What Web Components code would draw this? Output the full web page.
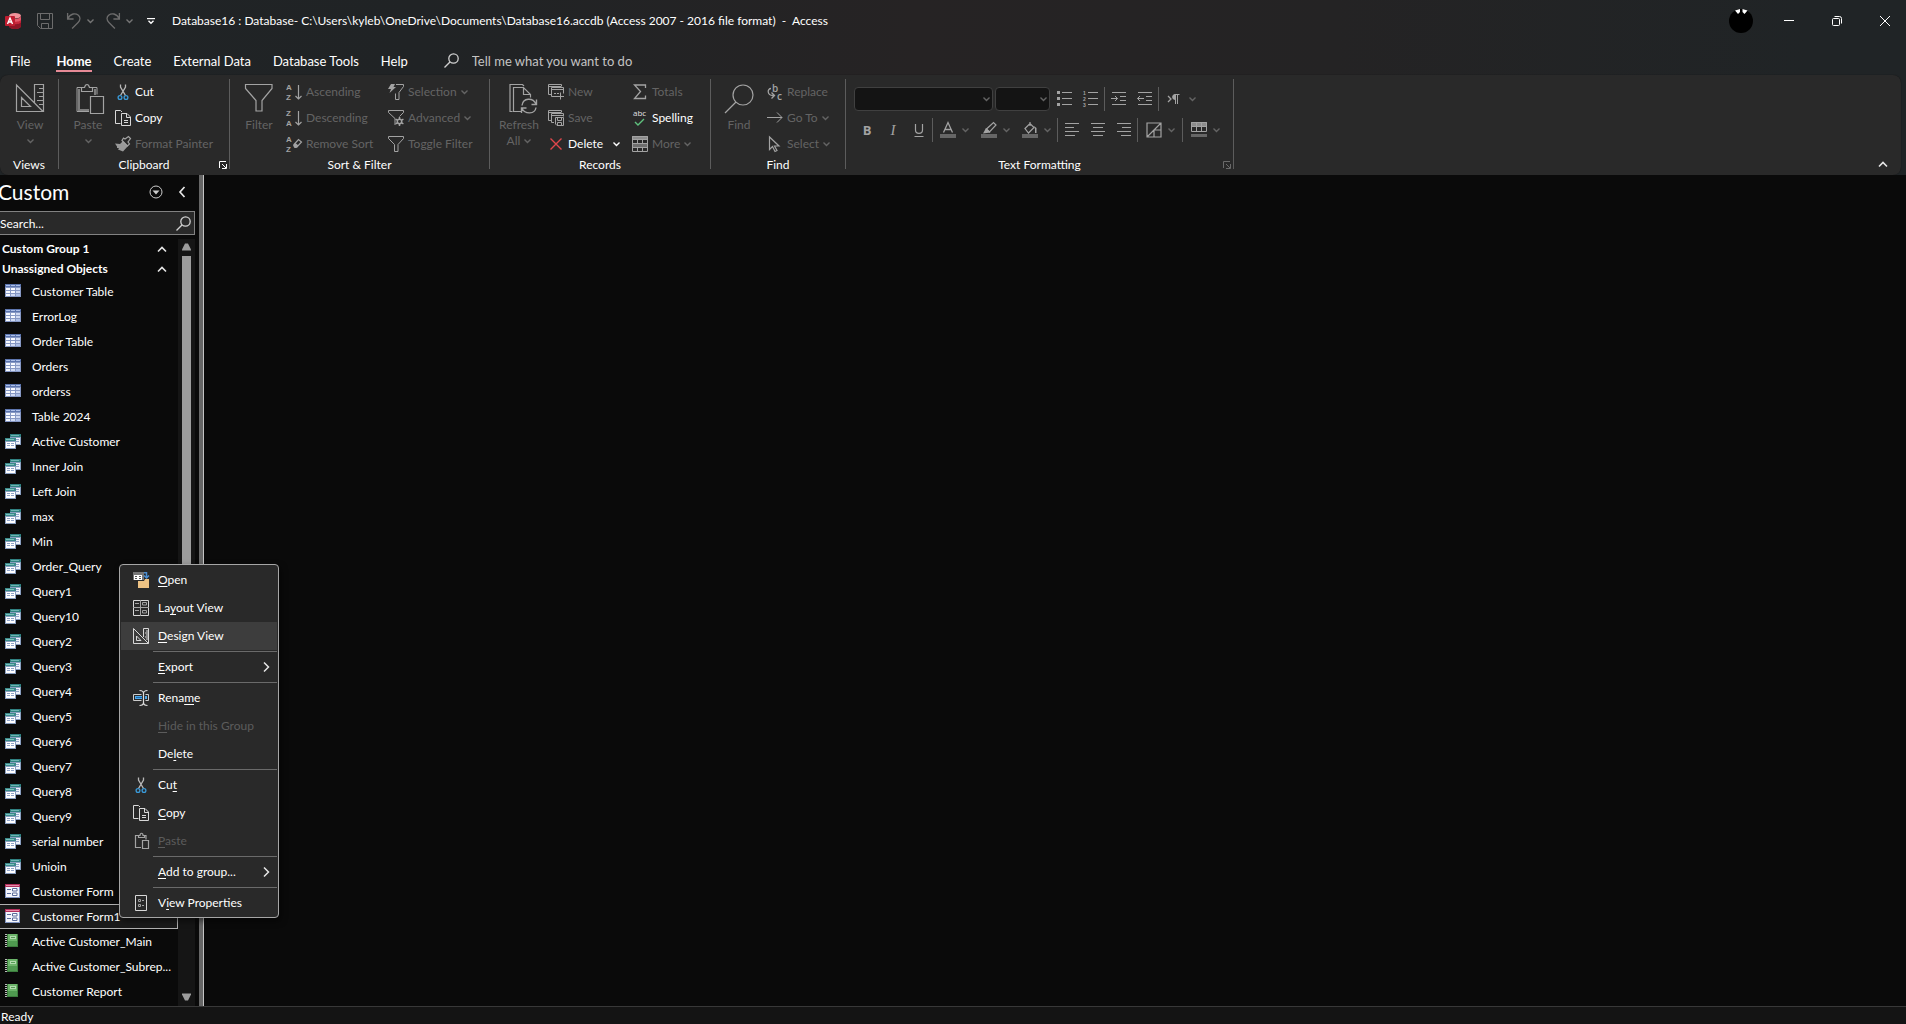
<!DOCTYPE html>
<html lang="en">
<head>
<meta charset="utf-8">
<title>Database16 - Access</title>
<style>
html,body{margin:0;height:100%}
body{background:#0a0a0a;color:#fff;font:12px/16px Lato,"Open Sans",sans-serif;overflow:hidden}
</style>
</head>
<body>
<access-app></access-app>
<script>
const L='fill="none" stroke="#a3a3a3"';
const W='fill="none" stroke="#d8d8d8"';
const copyPaths='<path d="M5.500 13.500h-5v-13h5l1.500 1.500"/><path d="M6.500 3.500h5.500l3.500 3.500v8.500h-9z M11.500 3.500v4h4 M9 10.500h4 M9 12.500h4"/>';
const cutShape='<g fill="none"><path stroke="#b8b8b8" stroke-width="1.300" d="M5.500 0.500v2.500l5 8.500 M10.500 0.500v2.500l-5 8.500"/><circle stroke="#3a9ad9" stroke-width="1.300" cx="5" cy="13.500" r="1.900"/><circle stroke="#3a9ad9" stroke-width="1.300" cx="11" cy="13.500" r="1.900"/></g>';
const letters=(a,b)=>`<g fill="#a3a3a3" font-family="Liberation Sans" font-weight="700" font-size="8"><text x="0" y="6">${a}</text><text x="0" y="16">${b}</text></g>`;
const downArrow=`<path ${L} stroke-width="1.200" d="M12.500 1v14 M9.500 12l3 3 3-3"/>`;
const funnel='<path d="M0.500 0.500h15v2l-5.500 6v7h-3.500v-7l-6-6z"/>';
const ICONS={
 access:[17,16,'<ellipse cx="10" cy="2.800" rx="6" ry="2.800" fill="#f0929a"/><path fill="#c7283c" d="M4 3v10c0 4 12 4 12 0v-10c0 4-12 4-12 0z"/><path fill="#8f1526" d="M4 9v4c0 4 12 4 12 0v-4c0 3-12 3-12 0z"/><path fill="#e3596a" d="M4 3c0 4 12 4 12 0v3.500c0 3-12 3-12 0z"/><rect x="0" y="3" width="10" height="10" rx="1" fill="#bf1d30"/><path fill="none" stroke="#fff" stroke-width="1.400" d="M2.500 11l2.500-6 2.500 6 M3.500 9h3"/>'],
 save:[16,16,`<path fill="none" stroke="#6c6c6c" d="M0.500 0.500h15v15h-12l-3-3z M3.500 0.500v6h9v-6 M4.500 15.500v-5h7v5"/>`],
 undo:[14,16,`<path fill="none" stroke="#6c6c6c" stroke-width="1.300" d="M0.600 0v6h6 M0.600 6c3-6 8-6 10.500-4 2.500 2 2.500 5 0 7.500l-6 6"/>`],
 redo:[14,16,`<path fill="none" stroke="#6c6c6c" stroke-width="1.300" d="M13.400 0v6h-6 M13.400 6c-3-6-8-6-10.500-4-2.500 2-2.500 5 0 7.500l6 6"/>`],
 customize:[8,6,'<path fill="#fff" d="M0 0h8v1.200h-8z"/><path fill="none" stroke="#fff" stroke-width="1.400" d="M1.500 2.800l2.500 2.500 2.500-2.500"/>'],
 chev:[7,4,'<path fill="none" stroke="currentColor" stroke-width="1.400" d="M0.500 0.500l3 3 3-3"/>'],
 up:[10,6,'<path fill="none" stroke="#e6e6e6" stroke-width="1.600" d="M1 5.500l4-4 4 4"/>'],
 search:[15,15,'<g fill="none" stroke="#d0d0d0" stroke-width="1.300"><circle cx="9.500" cy="5.500" r="4.700"/><path d="M6.200 8.800l-5.700 5.700"/></g>'],
 min:[10,10,'<path stroke="#fff" d="M0 4.500h10"/>'],
 restore:[10,10,'<path fill="none" stroke="#fff" d="M0.500 3.500q0-1 1-1h5q1 0 1 1v5q0 1-1 1h-5q-1 0-1-1z M2.500 0.500h5q2 0 2 2v5"/>'],
 close:[10,10,'<path stroke="#fff" d="M0 0l10 10 M10 0l-10 10"/>'],
 view:[28,28,`<path ${L} stroke-width="1.200" d="M0.500 1v26.500h26.500z M5.500 13.500v9h9z M18.500 18.500v-18h9v27 M23 4.500h4 M21 8.500h6 M23 12.500h4 M21 16.500h6 M23 20.500h4"/>`],
 paste:[32,30,`<g transform="translate(4 0)"><path fill="none" stroke="#a3a3a3" d="M7 3.500h-6v24h12 M16 3.500h5v7"/><path fill="none" stroke="#7d7d7d" stroke-width="2" d="M3 5v21h10 M19 5v6"/><path ${L} stroke-width="1.200" d="M5.500 7.500v-4h3c1-4 4-4 5 0h3v4z M14.500 12.500h13v17h-13z"/></g>`],
 cut:[16,16,cutShape],
 copy:[16,16,`<g ${W}>${copyPaths}</g>`],
 painter:[16,16,`<path fill="#9a9a9a" d="M0 7.500l5 0.500 3-3 5 5-5 5.500-5-2 1-1.500-2 0 0-1.500z"/><path ${L} stroke-width="1.200" d="M7 4.500l5.500 5.500 2-2-1.500-2 2.500-3.500-2-2-3.500 2.500-1.500-1z"/>`],
 filter:[28,28,`<path ${L} stroke-width="1.200" d="M0.500 0.500h26.500v4l-10 12v10.500h-6v-10.500l-10.500-12z"/>`],
 asc:[16,16,letters('A','Z')+downArrow],
 desc:[16,16,letters('Z','A')+downArrow],
 unsort:[16,16,letters('A','Z')+`<path ${L} stroke-width="1.200" d="M8 8.500l4.500-5 3 2.500-4.500 5z"/><path fill="#a3a3a3" d="M7 9.500l2.500-2.500 3 2.500-2 2.500h-2z"/>`],
 selection:[16,16,`<path ${L} d="M8 0.500h7.500v2l-4.500 6v7h-3.500v-6"/><path fill="#a3a3a3" d="M3 0h4l-1.500 3h2.500l-6.500 6 1.500-4h-3z"/>`],
 advanced:[16,16,`<path ${L} d="M7 15v-6.500l-6.500-6v-2h15v2l-4 4"/><circle ${L} stroke-width="1.500" cx="11.500" cy="11.500" r="2.200"/><path ${L} stroke-width="1.500" d="M11.500 7v2 M11.500 14v2 M7.600 9.200l1.700 1 M13.700 12.800l1.700 1 M15.400 9.200l-1.700 1 M7.600 13.800l1.700-1"/>`],
 toggle:[16,16,`<g ${L}>${funnel}</g>`],
 refresh:[36,30,`<g transform="translate(8 0)"><path ${L} stroke-width="1.200" d="M3.500 27.500h-2.500v-27h12.500l1.500 1.500 M12 27.500h-7.500v-24h10l7 7v3 M14.500 3.500v7h7"/><path ${L} stroke-width="1.400" d="M13 21.500c1-8 11-8 14-1.500 M27.500 15.500v5h-5 M27 23.500c-1 7-11 7-14 1 M12.500 29v-5h5"/></g>`],
 newrec:[16,16,`<path ${L} d="M3 10.500h-2.500v-10h13v2 M1 2.500h12"/><path ${L} d="M9 12.500h-5.500v-9h12v6 M3.500 5.500h12 M6 9.500h2 M9 9.500h2 M12.500 8.500v7 M9 12.500h7"/>`],
 saverec:[16,16,`<path ${L} d="M3 10.500h-2.500v-10h13v2 M1 2.500h12 M6 12.500h-2.500v-9h12v3 M3.500 5.500h12"/><path ${L} d="M7.500 7.500h8v8h-6.500l-1.500-1.500z M9.500 7.500v3h4v-3 M9.500 15v-2.500h4v2.500"/>`],
 del:[12,12,'<path stroke="#e0474c" stroke-width="1.400" d="M0.500 0.500l11 11 M11.500 0.500l-11 11"/>'],
 totals:[16,16,`<path ${L} stroke-width="1.300" d="M13.500 4v-3h-11l6 6.500-6 7h11v-3"/>`],
 spelling:[16,16,'<text x="1" y="6" font-family="Open Sans" font-size="8" fill="#e0e0e0">abc</text><path fill="none" stroke="#5fc27e" stroke-width="1.400" d="M3 12l3 3 6-6"/>'],
 more:[16,16,`<rect x="0" y="0" width="16" height="4" fill="#8c8c8c"/><rect x="0" y="7" width="16" height="4" fill="#6f6f6f"/><path ${L} d="M0.500 0.500h15v15h-15z M0 3.500h16 M0 7.500h16 M0 11.500h16 M5.500 4v3 M10.500 4v3 M5.500 12v3 M10.500 12v3"/>`],
 find:[30,30,`<circle ${L} stroke-width="1.200" cx="19" cy="11" r="10"/><path ${L} stroke-width="1.200" d="M12 18l-11 11"/>`],
 replace:[16,16,`<g fill="#a3a3a3" font-family="Open Sans" font-size="10" font-weight="600"><text x="5" y="8">b</text><text x="10" y="16">c</text></g><path ${L} stroke-width="1.300" d="M4 4.500c-4 0-4 7 2 7h1 M4.500 8.500l3 3-3 3"/>`],
 goto:[16,16,`<path ${L} d="M0 7.500h15 M10 2.500l5 5-5 5"/>`],
 select:[16,16,`<path ${L} stroke-width="1.200" d="M2.500 1v12.500l3-3 2.500 5 2-1-2.500-4.500h4.500z"/>`],
 bullets:[16,16,`<path fill="#a3a3a3" d="M0 0h3v3h-3z M0 6h3v3h-3z M0 12h3v3h-3z"/><path ${L} d="M5 1.500h10 M5 7.500h10 M5 13.500h10"/>`],
 numbers:[16,16,`<path ${L} d="M5 1.500h10 M5 7.500h10 M5 13.500h10"/><g fill="#a3a3a3" font-family="Liberation Sans" font-size="5" font-weight="700"><text x="0" y="4">1</text><text x="0" y="10">2</text><text x="0" y="16">3</text></g>`],
 indent:[16,16,`<path ${L} d="M1 1.500h14 M9 5.500h6 M9 9.500h6 M1 13.500h14 M0 7.500h6.500 M4 5l2.500 2.500-2.500 2.500"/>`],
 outdent:[16,16,`<path ${L} d="M1 1.500h14 M9 5.500h6 M9 9.500h6 M1 13.500h14 M0.500 7.500h6.500 M3 5l-2.500 2.500 2.500 2.500"/>`],
 rtl:[13,12,`<path ${L} stroke-width="1.300" d="M1 3l3 3-3 3"/><path ${L} d="M8.500 2v9 M10.500 2v9 M7.500 1.500h5"/><path fill="#a3a3a3" d="M8.500 1v6c-4.500 0-4.500-6 0-6z"/>`],
 bold:[16,16,'<text x="8" y="13" text-anchor="middle" font-family="Open Sans" font-weight="700" font-size="13" fill="#a3a3a3">B</text>'],
 italic:[16,16,'<text x="8" y="13" text-anchor="middle" font-family="Liberation Serif" font-style="italic" font-size="15" fill="#a3a3a3">I</text>'],
 under:[16,16,`<path ${L} stroke-width="1.200" d="M4.500 2v6c0 4.500 7 4.500 7 0v-6 M3.500 14.500h9"/>`],
 fontcolor:[16,16,`<path ${L} stroke-width="1.300" d="M3.500 10.500l4.500-10 4.500 10 M5 7.500h6"/><rect y="12" width="16" height="4" fill="#666"/>`],
 highlight:[16,16,`<path ${L} stroke-width="1.200" d="M5.500 7l7-6.500 2.500 2.500-6.500 7z"/><path fill="#a3a3a3" d="M5 6l4.500 4.500-7.500 1z"/><rect y="12" width="16" height="4" fill="#666"/>`],
 fill:[16,16,`<path ${L} stroke-width="1.200" d="M3 6.500l5-5 4 4-5.500 5.500z M8 0v4"/><path fill="#a3a3a3" d="M12 4l2.500 2v5h-1.500v-4z"/><rect y="12" width="16" height="4" fill="#666"/>`],
 aleft:[16,16,`<path ${L} d="M1 1.500h14 M1 5.500h9 M1 9.500h14 M1 13.500h10"/>`],
 acenter:[16,16,`<path ${L} d="M1 1.500h14 M3 5.500h10 M1 9.500h14 M3 13.500h10"/>`],
 aright:[16,16,`<path ${L} d="M1 1.500h14 M6 5.500h9 M1 9.500h14 M5 13.500h10"/>`],
 alt:[16,16,`<path ${L} stroke-width="1.200" d="M1 1h14v14h-14z M1 15l14-14 M8 8v7 M8 8h7"/>`],
 grid:[16,16,`<rect x="0" y="0" width="16" height="4" fill="#8c8c8c"/><path ${L} d="M0.500 0.500h15v9h-15z M0 4.500h16 M5.500 0v10 M10.500 0v10"/><rect y="12" width="16" height="3" fill="#666"/>`],
 launch:[8,8,'<path fill="none" stroke="currentColor" d="M7 0.500h-6.500v6.500 M3 3l4 4 M7.500 3v4.500h-4.500"/>'],
 circle:[14,14,'<circle cx="7" cy="7" r="6" fill="none" stroke="#ccc"/><path fill="#ccc" d="M3.500 5.500h7l-3.500 4z"/>'],
 left:[8,12,'<path fill="none" stroke="#e6e6e6" stroke-width="1.700" d="M6.500 1l-4.500 5 4.500 5"/>'],
 right:[8,10,'<path fill="none" stroke="#e6e6e6" stroke-width="1.500" d="M2 0.500l4.500 4.500-4.500 4.500"/>'],
 table:[16,16,'<rect y="0" width="16" height="13" fill="#8798c4"/><rect y="0" width="16" height="3" fill="#5c75ae"/><path fill="#f7f9ff" d="M1 4h4v2h-4z M6 4h4v2h-4z M1 7h4v2h-4z M6 7h4v2h-4z M1 10h4v2h-4z"/><path fill="#cfd9f2" d="M11 4h4v2h-4z M11 7h4v2h-4z M6 10h4v2h-4z"/><path fill="#abbde6" d="M11 10h4v2h-4z M1 1h4v1h-4z M6 1h4v1h-4z M11 1h4v1h-4z"/>'],
 query:[16,16,'<rect x="5" y="0" width="11" height="11" fill="#8a9fc0"/><rect x="5" width="11" height="3" fill="#2f8080"/><path fill="#6db3b0" d="M6 1h8v1h-8z"/><path fill="#eef3fb" d="M6 4h9v6h-9z"/><path fill="#8fa3c8" d="M11 5h3v1h-3z M11 7h3v1h-3z"/><rect x="0" y="4" width="11" height="11" fill="#8a9fc0"/><rect y="4" width="11" height="3" fill="#3a8a8a"/><path fill="#7fc0bd" d="M1 5h8v1h-8z"/><path fill="#fff" d="M1 8h9v6h-9z"/><path fill="#8fa3c8" d="M2 9h3v1h-3z M6 9h3v1h-3z M2 11h3v1h-3z M6 11h3v1h-3z"/>'],
 form:[16,16,'<rect y="0" width="15" height="14" fill="#8093bf"/><rect y="0" width="15" height="3" fill="#b0305c"/><path fill="#e58aa8" d="M1 1h13v1h-13z"/><rect x="1" y="3" width="13" height="10" fill="#f4f6fc"/><path fill="#5a6c9c" d="M2 5h4v1h-4z M2 9h4v1h-4z"/><path fill="#fff" stroke="#5a6c9c" d="M7.500 4.500h4.500v2.500h-4.500z M7.500 9h4.500v2.500h-4.500z"/>'],
 report:[16,16,'<path fill="#3c7d3e" d="M2 0h11v13h-11z"/><path fill="#6db56b" d="M3 0h9v11h-9z"/><path fill="#4f9a50" d="M3 7h9v5h-9z"/><path fill="#b4dcb0" d="M5 2h6v3h-6z"/><path fill="#559c55" d="M6 3h4v1h-4z"/><path stroke="#bdbdbd" stroke-dasharray="1 1" stroke-width="2" d="M1 0v13"/>'],
 open:[16,16,'<path fill="#777" d="M0 0h11v8h-11z"/><path fill="#fff" d="M1 3h8v5h-8z"/><path fill="#555" d="M2 4h2v1h-2z M6 4h2v1h-2z M2 6h2v1h-2z M6 6h2v1h-2z"/><path fill="#eec384" d="M5 9h6l1-2h4v9h-11z"/><path fill="none" stroke="#4b8ed2" stroke-width="1.500" d="M11 0.700h2.500v5 M11 3.500l2.500 2.500 2.500-2.500"/>'],
 layout:[16,16,`<path ${W} d="M0.500 0.500h15v15h-15z"/><path ${L} d="M7.500 0v16 M0 7.500h16 M2 3.500h4 M9.500 2.500h4v2.500h-4z M2 10.500h4 M9.500 10.500h4v2.500h-4z"/>`],
 design:[16,16,`<path ${W} d="M0.500 0.500v15h15z M3.500 8v4.500h4.500z M10.500 9v-8.500h5v15 M13 3h3 M12 5h4 M13 7h3 M12 9h4 M13 11h3"/>`],
 rename:[16,16,'<path fill="none" stroke="#ccc" d="M8.500 4.500h-8v6h8 M12.500 4.500h3v6h-3"/><path fill="#4fa8e8" d="M2 6h12v3h-12z"/><path fill="#1868b0" d="M3 7h6v1h-6z"/><path stroke="#292929" stroke-width="3" d="M10.500 2v12"/><path fill="none" stroke="#ddd" stroke-width="1.200" d="M6.500 0.500q4 0 4 3v9q0 3-4 3 M14.500 0.500q-4 0-4 3 M10.500 12.500q0 3 4 3"/>'],
 pastesm:[16,16,`<path ${L} stroke-width="1.200" d="M8 14.500h-5.500v-12h3 M11.500 2.500h1.500v4 M5.500 4.500v-2h1.500c0-3 3-3 3 0h1.500v2z M9.500 7.500h6v8h-6z"/>`],
 props:[16,16,`<path ${W} d="M2.500 0.500h11v15h-11z"/><path ${L} d="M5.500 4.500h2v2h-2z M5.500 9.500h2v2h-2z M9 5.500h2 M9 10.500h2"/>`],
 tri:[9,8,'<path fill="#9c9c9c" d="M3 0.500h3l3 6v1h-9v-1z"/>'],
 trid:[9,8,'<path fill="#9c9c9c" d="M3 7.500h3l3-6v-1h-9v1z"/>'],
 avatar:[24,24,'<circle cx="12" cy="12" r="12" fill="#000"/><path fill="#fff" d="M6 1.500l5-1.500v3l-2 2z M18.500 1.500l-5-1.500v3l2 2z"/>']
};
const BASE='*{box-sizing:border-box}button,input,select{font:inherit;color:inherit;margin:0;padding:0;border:0;background:none;outline:0;white-space:nowrap}';
function define(name,css,html,setup){
 const t=document.createElement('template');
 t.innerHTML=`<style>${BASE}${css}</style>${html}`;
 customElements.define(name,class extends HTMLElement{
  connectedCallback(){
   if(this.shadowRoot)return;
   this.attachShadow({mode:'open'}).append(t.content.cloneNode(true));
   if(setup)setup(this,this.shadowRoot);
  }
 });
}
define('ui-icon',':host{display:inline-flex;flex:none}svg{display:block;overflow:visible}','',(el,root)=>{
 const [w,h,body]=ICONS[el.getAttribute('name')];
 root.innerHTML+=`<svg width="${w}" height="${h}" viewBox="0 0 ${w} ${h}" aria-hidden="true">${body}</svg>`;
});

define('title-bar',`
:host{display:flex;align-items:center;height:42px;padding-left:5px}
.quick{display:flex;align-items:center;flex:none;width:167px}
.quick button{display:flex}
.s{margin-left:15px}.a{margin-left:14px}.b{margin-left:6px;color:#757575}.c{margin-left:12px}
.title{flex:1;white-space:pre}
.win{display:flex;gap:6px}
.win button{width:42px;height:42px;display:flex;align-items:center;justify-content:center}`,
`<div class="quick"><ui-icon name="access"></ui-icon>
<button class="s" aria-label="Save"><ui-icon name="save"></ui-icon></button>
<button class="a" aria-label="Undo"><ui-icon name="undo"></ui-icon></button><button class="b" aria-label="Undo list"><ui-icon name="chev"></ui-icon></button>
<button class="c" aria-label="Redo"><ui-icon name="redo"></ui-icon></button><button class="b" aria-label="Redo list"><ui-icon name="chev"></ui-icon></button>
<button class="a" aria-label="Customize toolbar"><ui-icon name="customize"></ui-icon></button></div>
<div class="title">Database16 : Database- C:\\Users\\kyleb\\OneDrive\\Documents\\Database16.accdb (Access 2007 - 2016 file format)  -  Access</div>
<div class="win"><button aria-label="Account"><ui-icon name="avatar"></ui-icon></button><button aria-label="Minimize"><ui-icon name="min"></ui-icon></button><button aria-label="Restore"><ui-icon name="restore"></ui-icon></button><button aria-label="Close"><ui-icon name="close"></ui-icon></button></div>`);

define('ribbon-tabs',`
:host{display:flex;height:33px;padding:4px 0 0 10px;font-size:13px;line-height:18px;align-items:center}
nav{display:flex;gap:22px;margin-right:36px}
button{height:23px;padding-top:2px;border-bottom:2px solid transparent}
button:first-child{margin-right:4px}
.on{font-weight:700;border-color:#e68a96}
label{display:flex;align-items:center;gap:13px;height:24px}
input{width:240px;height:20px}input::placeholder{color:#c4c4c4;opacity:1}`,
`<nav><button>File</button><button class="on">Home</button><button>Create</button><button>External Data</button><button>Database Tools</button><button>Help</button></nav>
<label><ui-icon name="search"></ui-icon><input aria-label="Tell me what you want to do" placeholder="Tell me what you want to do"></label>`);

define('ribbon-group',`
:host{display:flex;flex-direction:column;height:90px;flex:none;border-right:1px solid #5c5c5c;padding:0}
.body{display:flex;height:78px;flex:none}
.foot{position:relative;height:16px;flex:none;text-align:center}
.foot button{position:absolute;right:2px;top:4px;display:flex}
.dim{color:#6a6a6a}`,
`<div class="body"><slot></slot></div><div class="foot"><span></span></div>`,(el,root)=>{
 root.querySelector('span').textContent=el.getAttribute('label');
 if(el.hasAttribute('launcher')){
  root.querySelector('.foot').insertAdjacentHTML('beforeend',`<button class="${el.getAttribute('launcher')}" aria-label="More options"><ui-icon name="launch"></ui-icon></button>`);
 }
});

define('big-command',`
:host{display:block;flex:none;color:#646464}
button{width:100%;display:flex;flex-direction:column;align-items:center;padding-top:5px}
.i{height:30px;display:flex;align-items:flex-start;margin-bottom:3px}
.more{display:flex;align-items:center;gap:4px;height:16px}`,
`<button><span class="i"></span><slot></slot><span class="more"><slot name="second"></slot></span></button>`,(el,root)=>{
 root.querySelector('.i').innerHTML=`<ui-icon name="${el.getAttribute('icon')}"></ui-icon>`;
 if(el.hasAttribute('menu'))root.querySelector('.more').insertAdjacentHTML('beforeend','<ui-icon name="chev"></ui-icon>');
});

define('command-column',`:host{display:flex;flex-direction:column;flex:none}`,`<slot></slot>`);

define('small-command',`
:host{display:block;color:#646464}
:host([on]){color:#fff}
button{height:26px;display:flex;align-items:center}
.box{width:16px;display:flex;justify-content:center;margin-right:4px}
.t{margin-right:4px}
:host([split]) .t{margin-right:10px}`,
`<button><span class="box"></span><span class="t"><slot></slot></span></button>`,(el,root)=>{
 root.querySelector('.box').innerHTML=`<ui-icon name="${el.getAttribute('icon')}"></ui-icon>`;
 if(el.hasAttribute('menu'))root.querySelector('button').insertAdjacentHTML('beforeend','<ui-icon name="chev"></ui-icon>');
});

define('format-tools',`
:host{display:flex;flex-direction:column;gap:5px;padding:7px 0 0 8px;color:#646464;flex:1}
.row{display:flex;align-items:center;height:26px}
.pick{position:relative;display:flex;margin-right:2px}
.pick ui-icon{position:absolute;right:3px;top:10px;pointer-events:none}
select{appearance:none;height:24px;width:139px;background:#141414;border:1px solid #404040;border-radius:4px}
.s select{width:55px}
button{width:26px;height:24px;display:flex;align-items:center;justify-content:center}
button.m{width:41px;gap:6px}
button.n{width:44px;gap:6px}
button.r{width:44px;gap:9px}
i{width:1px;height:24px;background:#5c5c5c}
.sp{margin-right:1px}`,
`<div class="row"><span class="pick"><select aria-label="Font"></select><ui-icon name="chev"></ui-icon></span><span class="pick s"><select aria-label="Font size"></select><ui-icon name="chev"></ui-icon></span>
<button aria-label="Bullets"><ui-icon name="bullets"></ui-icon></button><button aria-label="Numbering"><ui-icon name="numbers"></ui-icon></button><i class="sp"></i><button aria-label="Increase indent"><ui-icon name="indent"></ui-icon></button><button aria-label="Decrease indent"><ui-icon name="outdent"></ui-icon></button><i></i><button class="r" aria-label="Text direction"><ui-icon name="rtl"></ui-icon><ui-icon name="chev"></ui-icon></button></div>
<div class="row"><button aria-label="Bold"><ui-icon name="bold"></ui-icon></button><button aria-label="Italic"><ui-icon name="italic"></ui-icon></button><button aria-label="Underline"><ui-icon name="under"></ui-icon></button><i class="sp"></i>
<button class="m" aria-label="Font color"><ui-icon name="fontcolor"></ui-icon><ui-icon name="chev"></ui-icon></button><button class="m" aria-label="Highlight"><ui-icon name="highlight"></ui-icon><ui-icon name="chev"></ui-icon></button><button class="m" aria-label="Background color"><ui-icon name="fill"></ui-icon><ui-icon name="chev"></ui-icon></button><i class="sp"></i>
<button aria-label="Align left"><ui-icon name="aleft"></ui-icon></button><button aria-label="Center"><ui-icon name="acenter"></ui-icon></button><button aria-label="Align right"><ui-icon name="aright"></ui-icon></button><i></i>
<button class="n" aria-label="Alternate row color"><ui-icon name="alt"></ui-icon><ui-icon name="chev"></ui-icon></button><i></i><button class="n" aria-label="Gridlines"><ui-icon name="grid"></ui-icon><ui-icon name="chev"></ui-icon></button></div>`);

define('ribbon-bar',`
:host{display:flex;height:100px;margin-right:5px;padding-top:4px;background:#292929;border-radius:8px;box-shadow:0 0 1px #111}
.end{margin:auto 13px 8px auto;display:flex}`,
`<ribbon-group label="Views" style="width:59px"><big-command icon="view" menu style="width:60px">View</big-command></ribbon-group>
<ribbon-group label="Clipboard" launcher="" style="width:171px"><big-command icon="paste" menu style="width:56px;padding-left:2px">Paste</big-command><command-column><small-command icon="cut" on>Cut</small-command><small-command icon="copy" on>Copy</small-command><small-command icon="painter">Format Painter</small-command></command-column></ribbon-group>
<ribbon-group label="Sort &amp; Filter" style="width:260px"><big-command icon="filter" style="width:56px;padding-left:2px">Filter</big-command><command-column style="width:102px"><small-command icon="asc">Ascending</small-command><small-command icon="desc">Descending</small-command><small-command icon="unsort">Remove Sort</small-command></command-column><command-column><small-command icon="selection" menu>Selection</small-command><small-command icon="advanced" menu>Advanced</small-command><small-command icon="toggle">Toggle Filter</small-command></command-column></ribbon-group>
<ribbon-group label="Records" style="width:221px"><big-command icon="refresh" menu style="width:58px">Refresh<span slot="second">All</span></big-command><command-column style="width:84px"><small-command icon="newrec">New</small-command><small-command icon="saverec">Save</small-command><small-command icon="del" on split menu>Delete</small-command></command-column><command-column><small-command icon="totals">Totals</small-command><small-command icon="spelling" on>Spelling</small-command><small-command icon="more" menu>More</small-command></command-column></ribbon-group>
<ribbon-group label="Find" style="width:135px"><big-command icon="find" style="width:56px">Find</big-command><command-column><small-command icon="replace">Replace</small-command><small-command icon="goto" menu>Go To</small-command><small-command icon="select" menu>Select</small-command></command-column></ribbon-group>
<ribbon-group label="Text Formatting" launcher="dim" style="width:388px"><format-tools></format-tools></ribbon-group>
<button class="end" aria-label="Collapse ribbon"><ui-icon name="up"></ui-icon></button>`);

define('nav-item',`
:host{display:block}
button{width:100%;height:25px;display:flex;align-items:center;gap:11px;padding-left:5px;border:1px solid transparent;border-left:0}
:host([selected]) button{background:#1a1a1a;border-color:#b0b0b0}`,
`<button><span class="box"></span><slot></slot></button>`,(el,root)=>{
 root.querySelector('.box').outerHTML=`<ui-icon name="${el.getAttribute('icon')}"></ui-icon>`;
});

const OBJECTS=[['table','Customer Table|ErrorLog|Order Table|Orders|orderss|Table 2024'],['query','Active Customer|Inner Join|Left Join|max|Min|Order_Query|Query1|Query10|Query2|Query3|Query4|Query5|Query6|Query7|Query8|Query9|serial number|Unioin'],['form','Customer Form|Customer Form1'],['report','Active Customer_Main|Active Customer_Subrep...|Customer Report']];
define('nav-pane',`
:host{display:flex;width:204px;flex:none;border-right:1px solid #c4c4c4;box-shadow:inset -4px 0 #666}
.in{width:195px;display:flex;flex-direction:column}
header{display:flex;align-items:center;height:36px;gap:15px;padding:0 9px 3px 0}
h1{flex:1;margin:0;font-size:21px;line-height:28px;font-weight:400;text-indent:-2px}
header button{display:flex}
label{display:flex;align-items:center;height:24px;border:1px solid #828282;border-left:0;background:#292929;padding-right:3px}
input{flex:1;min-width:0;height:20px}input::placeholder{color:#fff;opacity:1}
.cols{display:flex;flex:1;min-height:0;margin-top:4px}
.list{flex:1;min-width:0;overflow:hidden}
.sec{display:flex;align-items:center;justify-content:space-between;width:100%;height:20px;padding:0 11px 0 2px;font-weight:700}
.bar{width:17px;background:#151515;display:flex;flex-direction:column;align-items:center;padding:4px 0 5px;gap:5px}
.thumb{width:9px;background:#9c9c9c;flex:3}
.gap{flex:1}`,
`<div class="in"><header><h1>Custom</h1><button aria-label="Navigation options"><ui-icon name="circle"></ui-icon></button><button aria-label="Collapse pane"><ui-icon name="left"></ui-icon></button></header>
<label><input aria-label="Search objects" placeholder="Search..."><ui-icon name="search"></ui-icon></label>
<div class="cols"><div class="list"><button class="sec">Custom Group 1<ui-icon name="up"></ui-icon></button><button class="sec">Unassigned Objects<ui-icon name="up"></ui-icon></button></div>
<div class="bar"><ui-icon name="tri"></ui-icon><div class="thumb"></div><div class="gap"></div><ui-icon name="trid"></ui-icon></div></div></div>`,(el,root)=>{
 const list=root.querySelector('.list');
 for(const [icon,names] of OBJECTS)for(const name of names.split('|')){
  const item=document.createElement('nav-item');
  item.setAttribute('icon',icon);item.textContent=name;
  if(name==='Customer Form1')item.setAttribute('selected','');
  list.append(item);
 }
});

define('menu-item',`
:host{display:block}
:host([hot]){background:#3d3d3d}
:host([dim]){color:#5c5c5c}
button{width:100%;height:28px;display:flex;align-items:center;padding:0 7px 0 12px}
.box{width:16px;height:16px;margin-right:9px;display:flex}
.t{flex:1;text-align:left}
::slotted(u){text-underline-offset:2px}`,
`<button role="menuitem"><span class="box"></span><span class="t"><slot></slot></span></button>`,(el,root)=>{
 const icon=el.getAttribute('icon');
 if(icon)root.querySelector('.box').innerHTML=`<ui-icon name="${icon}"></ui-icon>`;
 if(el.hasAttribute('sub'))root.querySelector('button').insertAdjacentHTML('beforeend','<ui-icon name="right"></ui-icon>');
});
define('context-menu',`
:host{display:block;width:160px;padding:1px 1px 0;background:#292929;border:1px solid #a6a6a6;border-radius:4px;box-shadow:2px 3px 6px rgba(0,0,0,.5)}
hr{margin:1px 0 1px 32px;border:0;height:1px;background:#6a6a6a}`,
`<menu-item icon="open"><u>O</u>pen</menu-item><menu-item icon="layout">La<u>y</u>out View</menu-item><menu-item icon="design" hot><u>D</u>esign View</menu-item><hr>
<menu-item sub><u>E</u>xport</menu-item><hr>
<menu-item icon="rename">Rena<u>m</u>e</menu-item><menu-item dim><u>H</u>ide in this Group</menu-item><menu-item>De<u>l</u>ete</menu-item><hr>
<menu-item icon="cut">Cu<u>t</u></menu-item><menu-item icon="copy"><u>C</u>opy</menu-item><menu-item icon="pastesm" dim><u>P</u>aste</menu-item><hr>
<menu-item sub><u>A</u>dd to group...</menu-item><hr><menu-item icon="props">V<u>i</u>ew Properties</menu-item>`);

define('access-app',`
:host{display:flex;flex-direction:column;height:100vh;position:relative}
.chrome{background:linear-gradient(90deg,#202426 0,#202325 22%,#262324 48%,#242324 70%,#202426 95%)}
main{flex:1;min-height:0;display:flex;background:#0a0a0a}
footer{border-top:1px solid #383838;background:#141414;padding:2px 1px 0;line-height:15px}
context-menu{position:absolute;left:119px;top:564px}`,
`<div class="chrome"><title-bar></title-bar><ribbon-tabs></ribbon-tabs><ribbon-bar></ribbon-bar></div>
<main><nav-pane></nav-pane></main><footer>Ready</footer><context-menu role="menu"></context-menu>`);
</script>
</body>
</html>
